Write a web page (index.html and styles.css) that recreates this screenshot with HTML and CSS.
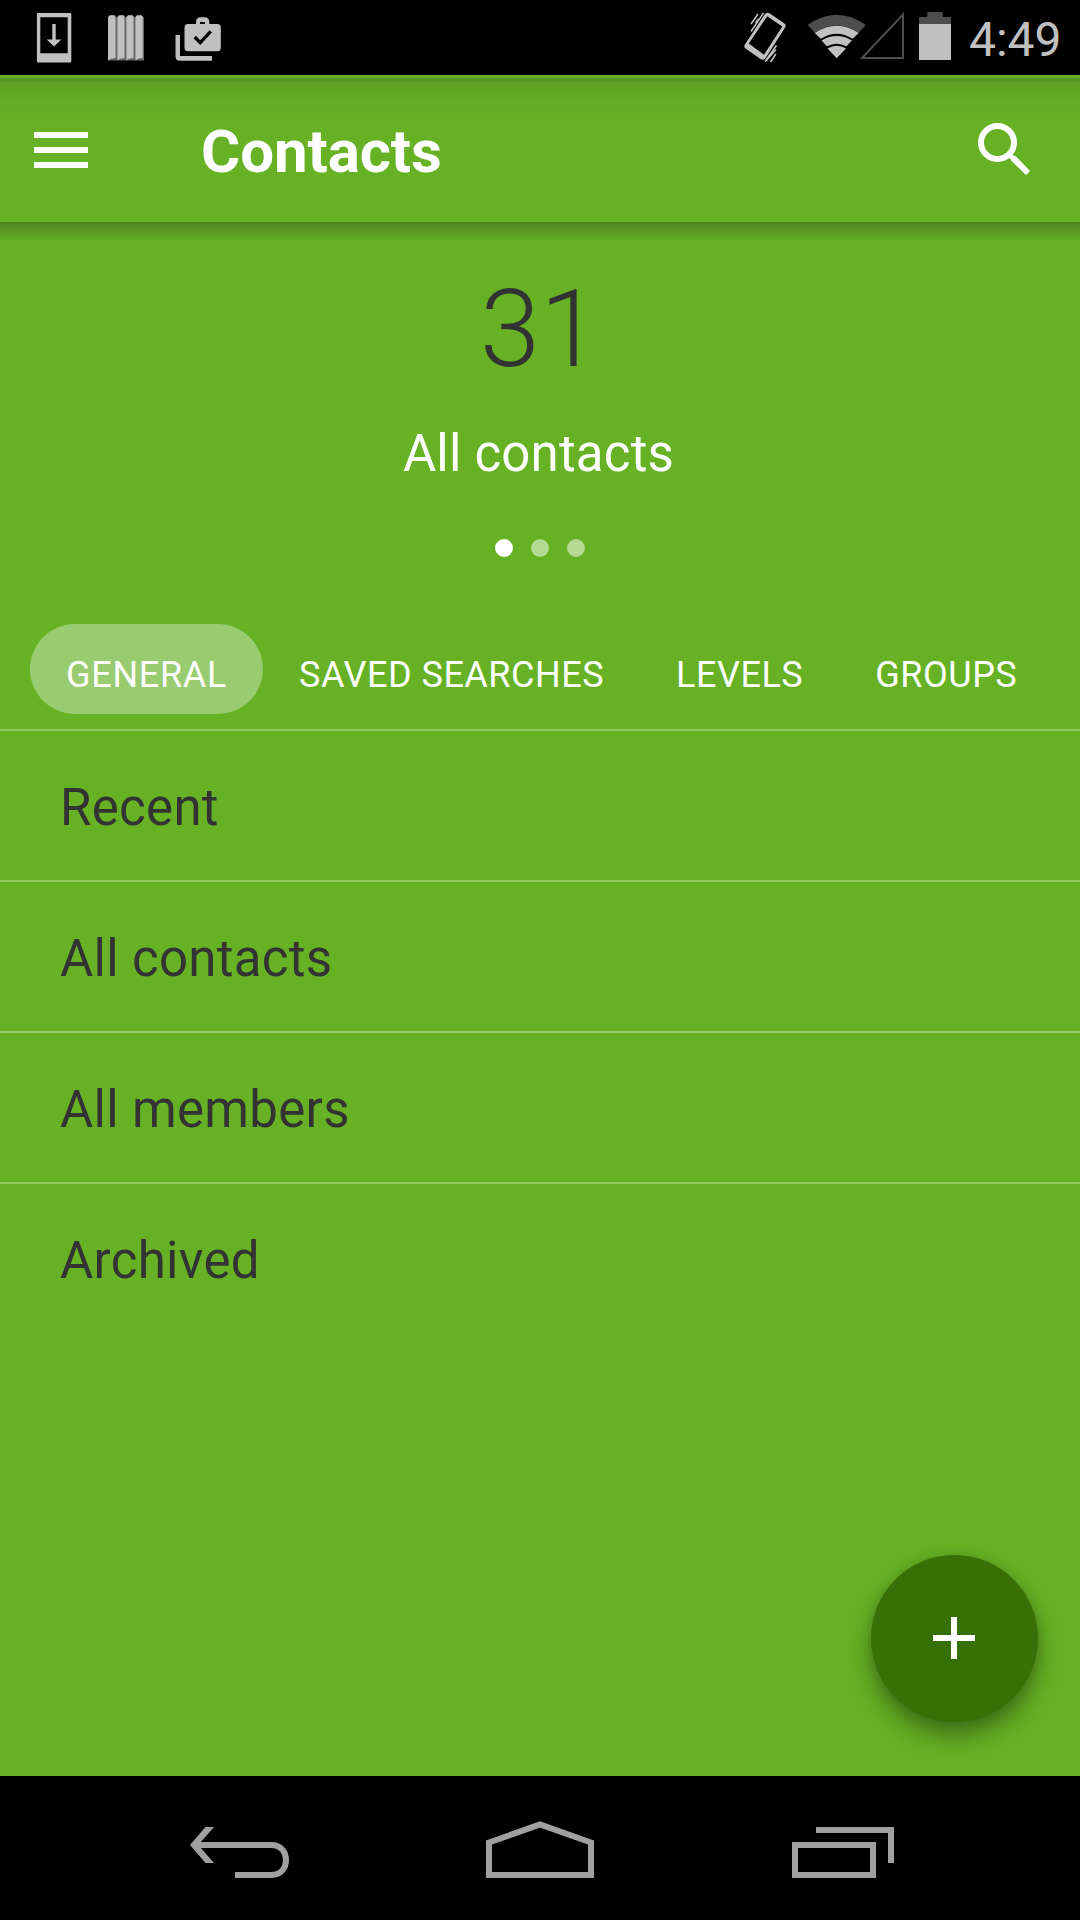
FILE: index.html
```html
<!DOCTYPE html>
<html lang="en">
<head>
<meta charset="utf-8">
<title>Contacts</title>
<link rel="stylesheet" href="styles.css">
</head>
<body>
<div class="screen">
  <header class="status-bar">
    <svg class="status-icons" width="240" height="75" viewBox="0 0 240 75">
      <path fill="#c0c0c0" fill-rule="evenodd" d="M38.500 13h31.500q1.300 0 1.300 1.300v47q0 1.300-1.300 1.300H38.200q-1.300 0-1.300-1.300v-47q0-1.300 1.300-1.300zM40.300 17.200v36h27.400v-36z"/>
      <path fill="#c0c0c0" d="M52.300 24h3.400v15.600h5.600L54 46.600l-7.300-7h5.600z"/>
      <g class="book">
        <path fill="#666" d="M108 17.500l2-2h5l2 2v43h-9zM117 17.500l2-2h5l2 2v43h-9zM126 17.500l2-2h5l2 2v43h-9zM135 17.500l2-2h5l2 2v43h-9z"/>
        <path fill="#c0c0c0" d="M108 17l2-1.800h4.500l1 1.800v41l-5 .7-2.500 1.700zM117.400 17l1.700-1.800h4.400l1 1.800v41l-4.500.7-2.600 1.700zM126.400 17l1.700-1.800h4.400l1 1.800v41l-4.500.7-2.600 1.700zM135.400 17l1.700-1.800h4.400l1.200 1.800v41l-4.700.7-2.600 1.700z"/>
      </g>
      <path fill="#c0c0c0" fill-rule="evenodd" d="M188 24h8v-2q0-4.800 4.800-4.800h3.700q4.800 0 4.800 4.800v2h8q3.500 0 3.500 3.500v20.300q0 3.500-3.500 3.500H188q-3.500 0-3.500-3.500V27.500q0-3.500 3.500-3.500zM200 24h5v-2h-5z"/>
      <path fill="#c0c0c0" d="M175.500 35h4.500v21h32v4.700h-32q-4.500 0-4.500-4.500z"/>
      <path fill="none" stroke="#000" stroke-width="3.300" d="M194.700 37l5.500 5.600 10.600-11.300"/>
    </svg>
    <svg class="status-icons" width="240" height="75" viewBox="720 0 240 75">
      <path fill="#c0c0c0" fill-rule="evenodd" d="M769.500 13.300L784.500 23.500q2 1.500.7 3.700L765.800 57.800q-2 3.200-5.300 1.200L745.500 48.500q-2-1.500-.7-3.700L764.200 15q2.200-3.300 5.300-1.700zM767.200 16.200L748.800 43.500 764 54.800 782.300 26.400z"/>
      <path stroke="#c0c0c0" stroke-width="1.500" fill="none" d="M751 24l7-10M751 31.500l12.500-18.500M755.500 23l3-4M765 61.500l11.500-16M765.500 61.500l10.500-12M770.500 62l5.300-8"/>
      <path fill="#4d4d4d" d="M807.600 25Q836.700 4.500 865.800 25L858.500 32.800Q836.700 18 814.900 32.800z"/>
      <path fill="#c0c0c0" d="M814.700 33Q836.700 18.500 858.700 33L852.700 38.800Q836.700 28.500 820.700 38.800zM821.500 40.400Q836.700 31.800 851.900 40.400L846.500 46.300Q836.700 41 826.900 46.300zM827.500 48.500Q836.700 43.200 846 48.500L836.700 58.300z"/>
      <path fill="none" stroke="#4d4d4d" stroke-width="2" d="M862 58L903 14.500V58z"/>
      <path fill="#4d4d4d" d="M919 24v-7h8.300v-5h15.400v5h8.300v7z"/>
      <path fill="#c0c0c0" d="M919 24h32v36h-32z"/>
    </svg>
    <span class="clock">4:49</span>
  </header>

  <main class="app">
    <div class="toolbar">
      <svg width="54" height="36" viewBox="0 0 54 36"><path fill="#fff" d="M0 0h54v6H0zM0 15h54v6H0zM0 30h54v6H0z"/></svg>
      <h1 class="title">Contacts</h1>
      <svg class="search" width="54" height="54" viewBox="0 0 54 54">
        <circle cx="20.500" cy="20.500" r="16.500" fill="none" stroke="#fff" stroke-width="6"/>
        <path fill="#fff" d="M34 34h4.500L53 49 49 53 34 38.500zM31 34l3-3 4 4-4 3z"/>
      </svg>
    </div>

    <section class="summary">
      <div class="count">31</div>
      <div class="label">All contacts</div>
      <div class="pager"><i class="dot active"></i><i class="dot"></i><i class="dot"></i></div>
    </section>

    <nav class="tabs">
      <span class="tab selected">GENERAL</span>
      <span class="tab">SAVED SEARCHES</span>
      <span class="tab">LEVELS</span>
      <span class="tab">GROUPS</span>
    </nav>

    <ul class="list">
      <li>Recent</li>
      <li>All contacts</li>
      <li>All members</li>
      <li>Archived</li>
    </ul>

    <button class="fab" aria-label="Add contact">
      <svg width="42" height="42" viewBox="0 0 42 42"><path fill="#fff" d="M18 0h6v18h18v6H24v18h-6V24H0v-6h18z"/></svg>
    </button>
  </main>

  <footer class="nav-bar">
    <svg width="1080" height="144" viewBox="0 1776 1080 144" fill="none" stroke="#a0a0a0" stroke-width="6">
      <path fill="#a0a0a0" stroke="none" d="M205.500 1827h8.500l-14 16v4l14 16h-8.500L190 1845z"/>
      <path d="M198 1845h73c11 0 15 8 15 15s-4 15-15 15h-36"/>
      <path d="M489 1842.500L540 1824.500 591 1842.500V1875H489z"/>
      <path d="M795 1845h78v30h-78zM816 1830h75v33"/>
    </svg>
  </footer>
</div>
</body>
</html>
```
FILE: styles.css
```css
* { box-sizing: border-box; margin: 0; padding: 0; }

body {
  background: #000;
  font-family: Roboto, sans-serif;
}

.screen {
  width: 1080px;
  height: 1920px;
  display: flex;
  flex-direction: column;
  overflow: hidden;
}

svg { display: block; flex: none; }

.status-bar {
  height: 75px;
  display: flex;
  align-items: center;
  background: #000;
}

.status-icons + .status-icons { margin-left: 480px; }

.clock {
  margin-left: 9px;
  padding-top: 5px;
  color: #c0c0c0;
  font-size: 48px;
  line-height: 56px;
}

.app {
  position: relative;
  height: 1701px;
  display: flex;
  flex-direction: column;
  background: #66b224;
}

.toolbar {
  height: 147px;
  display: flex;
  align-items: center;
  padding: 3px 49px 0 34px;
  background:
    linear-gradient(#5a9722, #5a9722) 0 3px / 100% 3px no-repeat,
    linear-gradient(#5c9e22, #62aa24 45%, #66b224) 0 6px / 100% 38px no-repeat,
    #66b224;
}

.title {
  margin-left: 113px;
  padding-top: 3px;
  color: #fff;
  font-size: 60px;
  line-height: 70px;
  font-weight: 700;
  letter-spacing: -0.1px;
}

.search {
  margin-left: auto;
  margin-bottom: 2px;
}

.summary {
  height: 384px;
  display: flex;
  flex-direction: column;
  align-items: center;
  background: linear-gradient(#4e821f, #5a9822 45%, #66b224) 0 0 / 100% 20px no-repeat;
}

.count {
  margin-top: 44px;
  color: #333;
  font-size: 108px;
  font-weight: 300;
  line-height: 126px;
}

.label {
  margin-top: 32px;
  padding-right: 3px;
  color: #fff;
  font-size: 51px;
  line-height: 60px;
  letter-spacing: 0.2px;
}

.pager {
  display: flex;
  gap: 18px;
  margin-top: 55px;
}

.dot {
  width: 18px;
  height: 18px;
  border-radius: 50%;
  background: rgba(255, 255, 255, 0.5);
}

.dot.active { background: #fff; }

.tabs {
  height: 123px;
  display: flex;
  align-items: flex-start;
  padding: 18px 0 0 30px;
}

.tab {
  height: 90px;
  padding: 9px 36px 0;
  border-radius: 45px;
  color: #fff;
  font-size: 36px;
  line-height: 84px;
  letter-spacing: 0.52px;
  white-space: nowrap;
}

.tab.selected {
  background: #99cc70;
  letter-spacing: 0.7px;
}

.list { list-style: none; }

.list li {
  height: 151px;
  padding: 2px 0 0 60px;
  border-top: 2px solid #93c966;
  color: #333;
  font-size: 51px;
  line-height: 149px;
  letter-spacing: 0.3px;
}

.fab {
  position: absolute;
  left: 870.5px;
  top: 1479.5px;
  width: 167px;
  height: 167px;
  display: flex;
  align-items: center;
  justify-content: center;
  border: 0;
  border-radius: 50%;
  background: #377007;
  box-shadow: 0 14px 24px rgba(0, 0, 0, 0.36), 0 0 12px rgba(0, 0, 0, 0.12);
}

.nav-bar { height: 144px; background: #000; }
```
